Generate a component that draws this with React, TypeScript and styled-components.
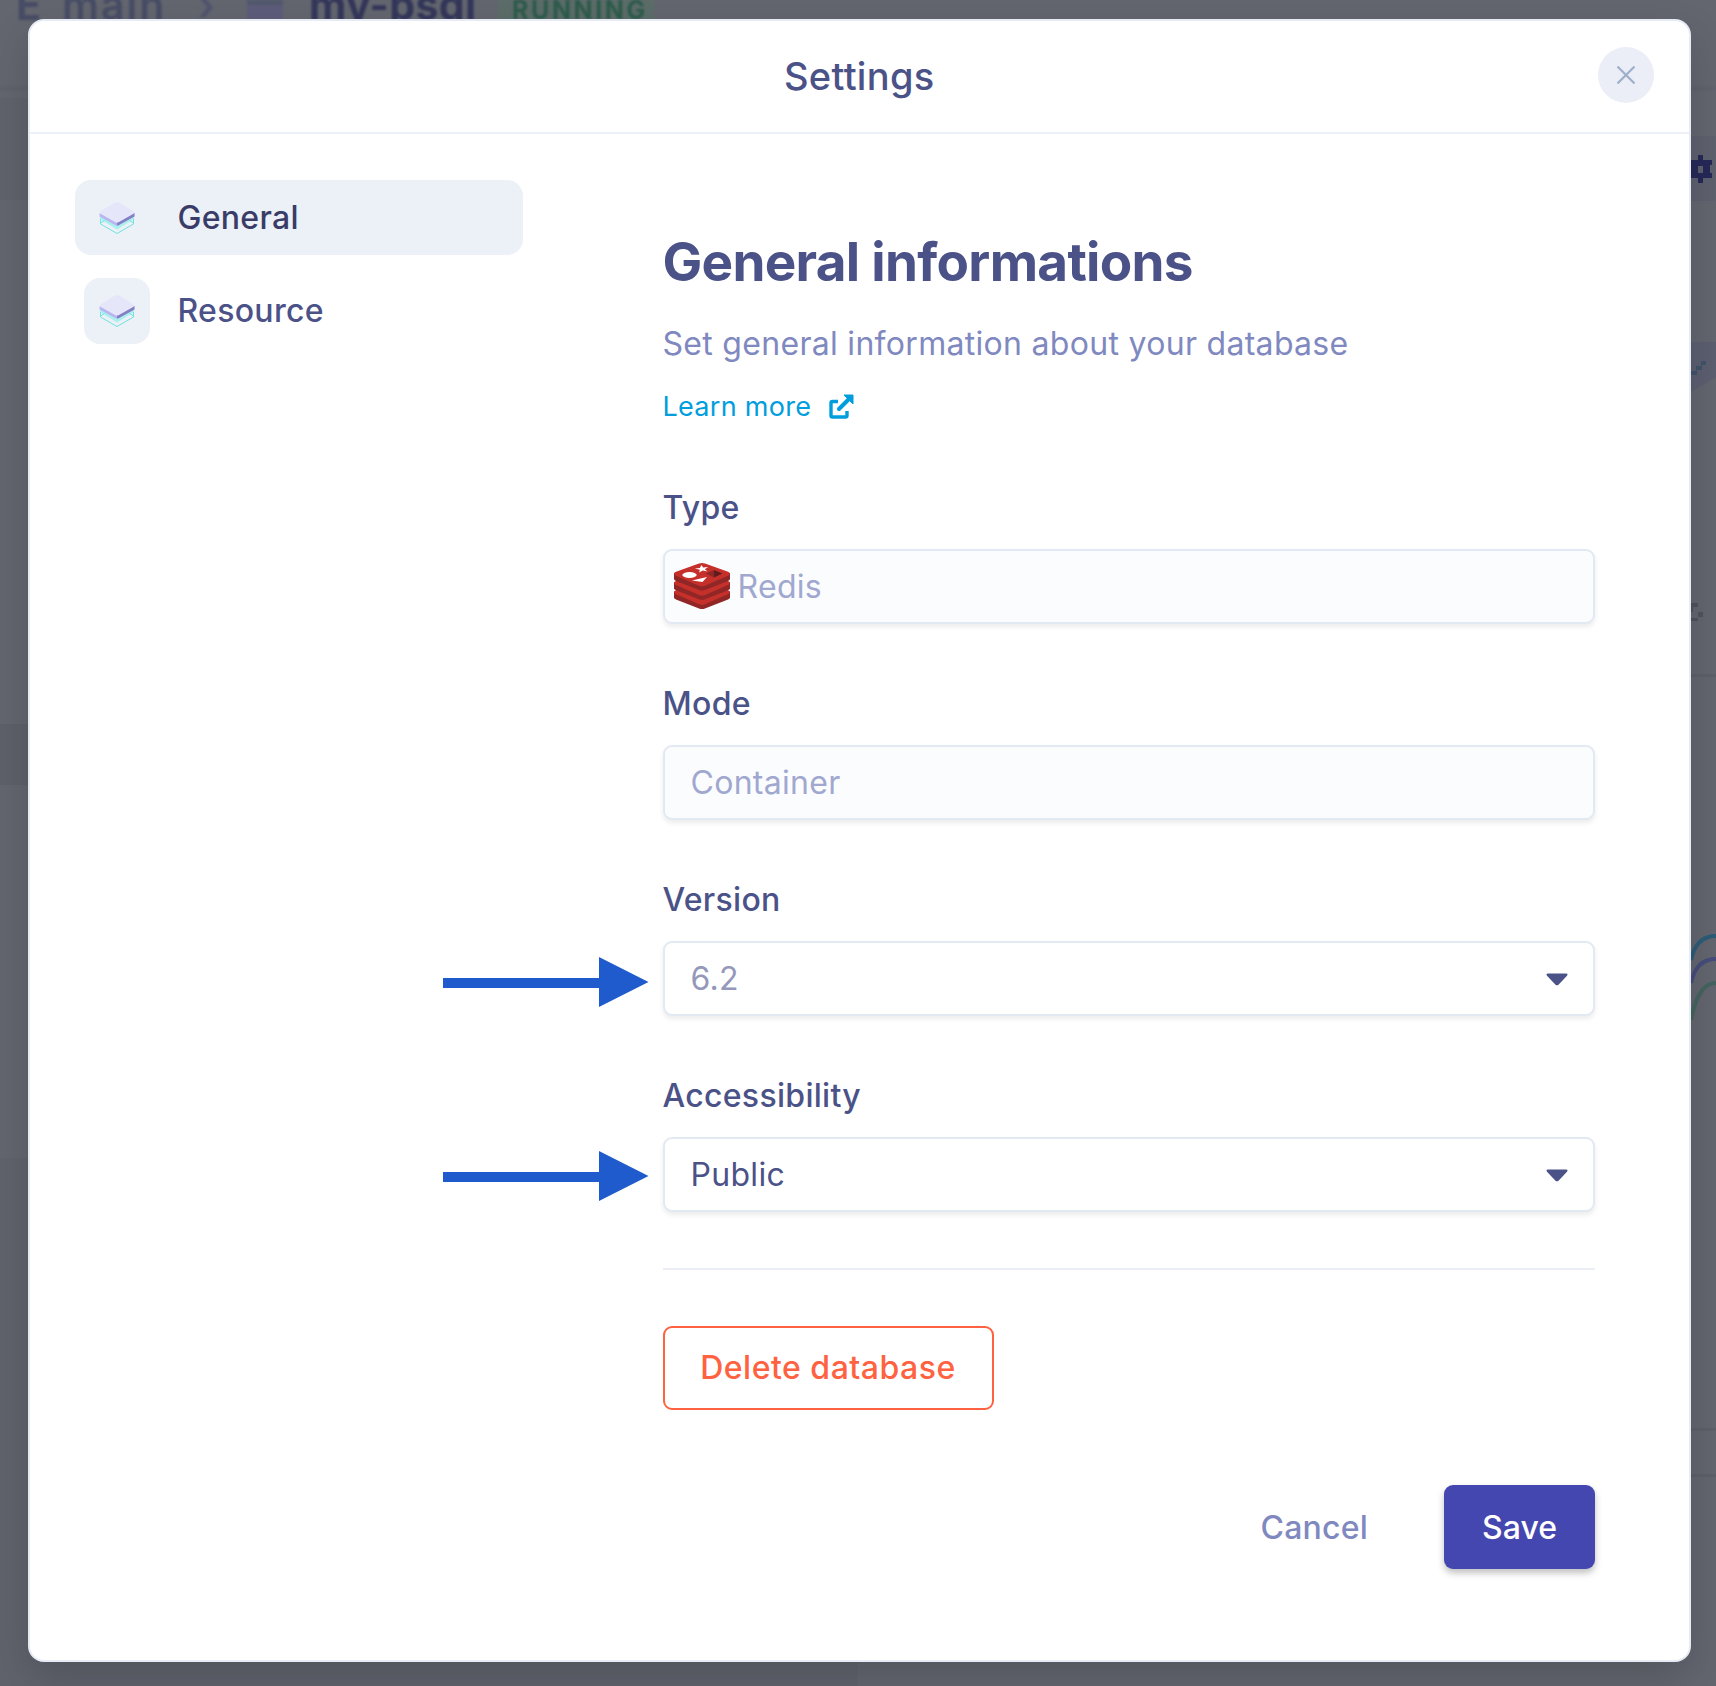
import React from "react";
import styled, { createGlobalStyle } from "styled-components";

const GlobalStyle = createGlobalStyle`
  *, *::before, *::after { box-sizing: border-box; }
  html, body { margin: 0; padding: 0; }
  body { background: #63666f; overflow: hidden; }
  button { font: inherit; cursor: pointer; }
`;

const Page = styled.div`
  position: relative;
  width: 1716px;
  height: 1686px;
  overflow: hidden;
  font-family: Inter, "Liberation Sans", sans-serif;
  font-size: 32px;
  letter-spacing: 0.3px;
  color: #4b5288;
`;

/* ---------- dimmed console behind the dialog ---------- */

const Console = styled.div`
  height: 100%;
  display: grid;
  grid-template: 90px 1fr / 1fr 1fr;
  background: #63666f;
`;

const Breadcrumb = styled.div`
  grid-column: 1 / -1;
  display: flex;
  align-items: flex-start;
  padding-left: 16px;
  border-bottom: 3px solid #5e616b;
  filter: blur(1px);
`;

const Crumb = styled.span<{ $width: number; $color: string; $bold?: boolean }>`
  width: ${(p) => p.$width}px;
  margin-top: -15px;
  line-height: 40px;
  font-size: 41px;
  white-space: nowrap;
  letter-spacing: ${(p) => (p.$bold ? 0.4 : 2)}px;
  font-weight: ${(p) => (p.$bold ? 700 : 600)};
  color: ${(p) => p.$color};
`;

const CrumbIcon = styled.span`
  width: 36px;
  height: 25px;
  margin-right: 26px;
  background: linear-gradient(#51596e 20%, #5d5c7a 20%);
`;

const StateTag = styled.span`
  width: 156px;
  height: 34px;
  padding-left: 14px;
  margin-left: 9px;
  background: #5c6d69;
  color: #2d5b4b;
  font-weight: 700;
  font-size: 25px;
  line-height: 20px;
  letter-spacing: 2.6px;
`;

const Column = styled.div`
  display: flex;
  flex-direction: column;
`;

const Strip = styled.div<{ $height: number; $color?: string; $line?: boolean }>`
  flex: none;
  height: ${(p) => p.$height}px;
  background: ${(p) => p.$color ?? "transparent"};
  border-bottom: ${(p) => (p.$line ? "3px solid #5d6069" : "none")};
`;

const EdgeArt = styled.svg`
  position: absolute;
  top: 0;
  right: 0;
`;

/* ---------- dialog ---------- */

const Overlay = styled.div`
  position: absolute;
  inset: 0;
  padding: 19px 25px 24px 27.5px;
  display: flex;
`;

const Dialog = styled.section`
  flex: 1;
  display: flex;
  flex-direction: column;
  background: #fff;
  border: 2px solid #e6ebf5;
  border-radius: 16px;
  box-shadow: 0 16px 40px rgba(0, 0, 0, 0.16);
`;

const Header = styled.header`
  height: 113px;
  flex: none;
  display: grid;
  grid-template-columns: 1fr auto 1fr;
  align-items: center;
  padding: 0 35px;
  border-bottom: 2px solid #ecf1f7;
`;

const Title = styled.h1`
  grid-column: 2;
  margin: 0 0 2px;
  font-size: 38px;
  line-height: 44px;
  font-weight: 500;
`;

const CloseButton = styled.button`
  justify-self: end;
  width: 56px;
  height: 56px;
  margin-bottom: 3px;
  display: grid;
  place-items: center;
  padding: 0;
  border: 0;
  border-radius: 50%;
  background: #ebeef7;
`;

const Body = styled.div`
  flex: 1;
  display: flex;
  align-items: flex-start;
`;

const Nav = styled.nav`
  width: 448px;
  margin: 46px 140px 0 45px;
  display: flex;
  flex-direction: column;
  gap: 18px;
`;

const NavItem = styled.a<{ $active?: boolean }>`
  height: 75px;
  display: flex;
  align-items: center;
  padding-left: 9px;
  gap: 28px;
  border-radius: 16px;
  font-weight: 500;
  background: ${(p) => (p.$active ? "#ecf0f7" : "transparent")};
  color: ${(p) => (p.$active ? "#383c67" : "#4b5288")};
`;

const NavIcon = styled.span`
  width: 66px;
  height: 66px;
  display: grid;
  place-items: center;
  border-radius: 16px;
  background: #ecf0f7;
`;

const Form = styled.main`
  width: 932.5px;
  display: flex;
  flex-direction: column;
  align-items: stretch;
`;

const Heading = styled.h2`
  margin: 94px 0 0;
  font-size: 53px;
  line-height: 68px;
  font-weight: 700;
  letter-spacing: -0.7px;
`;

const Lead = styled.p`
  margin: 28px 0 0;
  line-height: 40px;
  white-space: nowrap;
  color: #7f89bf;
`;

const LearnMore = styled.a`
  display: flex;
  align-items: center;
  gap: 18px;
  margin: 24px 0 60px;
  height: 36px;
  font-size: 27px;
  color: #009edd;
`;

const Field = styled.div`
  height: 196px;
  padding-top: 4px;
  display: flex;
  flex-direction: column;
  gap: 21px;
`;

const Label = styled.label`
  line-height: 40px;
  font-weight: 500;
`;

const Control = styled.div<{ $disabled?: boolean; $color: string; $inset: number }>`
  height: 75px;
  display: flex;
  align-items: center;
  padding: 0 25px 1px ${(p) => p.$inset}px;
  gap: 8px;
  border: 2px solid #e2e9f3;
  border-radius: 9px;
  background: ${(p) => (p.$disabled ? "#fbfcfe" : "#fff")};
  box-shadow: 0 3px 5px rgba(0, 0, 0, 0.08);
  color: ${(p) => p.$color};

  svg:last-child {
    position: relative;
    top: 1px;
  }
`;

const Value = styled.span`
  flex: 1;
`;

const Divider = styled.hr`
  width: 100%;
  height: 2px;
  margin: 0;
  border: 0;
  background: #ebeff5;
`;

const DangerButton = styled.button`
  align-self: flex-start;
  width: 331px;
  height: 84px;
  margin-top: 56px;
  padding: 0 0 1px;
  border: 2px solid #ff6240;
  border-radius: 9px;
  background: #fff;
  color: #ff6240;
  font-weight: 500;
  letter-spacing: 0.5px;
`;

const Actions = styled.div`
  display: flex;
  justify-content: flex-end;
  gap: 76px;
  margin-top: 75px;
`;

const CancelButton = styled.button`
  padding: 0;
  border: 0;
  background: none;
  font-weight: 500;
  letter-spacing: 0.2px;
  color: #7f89bf;
`;

const SaveButton = styled.button`
  width: 151px;
  height: 84px;
  padding: 0;
  border: 0;
  border-radius: 9px;
  background: #4547b1;
  box-shadow: 0 4px 7px rgba(0, 0, 0, 0.25);
  color: #fff;
  font-weight: 500;
`;

/* Callout arrows drawn over the dialog */
const Callout = styled.svg<{ $top: number }>`
  position: absolute;
  left: 443px;
  top: ${(p) => p.$top}px;
`;

const LayersIcon = () => (
  <svg width="36" height="34" viewBox="0 0 36 34">
    <path d="M1 18 18 28.500 35 18v-4L18 23 1 14z" fill="#a9f0ee" />
    <path d="M1.500 18v5L18 32.500 34.500 23v-5M1.500 22l4-2.500M34.500 22l-4-2.500" fill="none" stroke="#6fe3de" strokeWidth="1" />
    <path d="M.6 12v3.500L16 24q2 1 4 0l15.400-8.500V12L18 21z" fill="#b9b5f0" />
    <path d="M18 21 35.400 12v3.500L20 24q-1 .6-2 .6z" fill="#8580c4" />
    <path d="M16 1.500q2-1 4 0l14 8.500q2 1.500 0 3L20 21q-2 1-4 0L2 13q-2-1.500 0-3z" fill="#e6e6fb" />
  </svg>
);

const RedisIcon = () => (
  <svg width="56" height="47" viewBox="0 0 56 47">
    {[18.5, 9.25, 0].map((y) => (
      <g key={y} transform={`translate(0 ${y})`}>
        <path d="M0 10v6q0 1 2 2l23 9q3 1 6 0L54 18q2-1 2-2v-6z" fill="#912626" />
        <path d="M1.500 12.500Q-1.500 10 2 8.800L25 .6q3-1 6 0L54 8.800q3.500 1.200.5 3.700L31 22.700q-3 1.200-6 0z" fill="#c6302b" />
      </g>
    ))}
    <ellipse cx="15.500" cy="12" rx="7.200" ry="2.900" fill="#fff" />
    <path d="m27.500 2 1.600 2.400 5-.4-3.200 2.200 2.600 2.400-4.700-1-3.600 2 .6-2.800-5-1.300 5-.6z" fill="#fff" />
    <path d="M18 17.500 33 14l-4.500 5z" fill="#fff" />
    <path d="M31.500 10.500 40 7v7.500z" fill="#912626" />
    <path d="m40 7 8.500 3.500L40 14.500z" fill="#621b1c" />
  </svg>
);

const ExternalIcon = () => (
  <svg width="25" height="25" viewBox="0 0 25 25" fill="none" stroke="#009edd">
    <path d="M9 7.500H3.500a1.500 1.500 0 0 0-1.500 1.500v12.500A1.500 1.500 0 0 0 3.500 23h13a1.500 1.500 0 0 0 1.500-1.500V17" strokeWidth="3.400" />
    <path d="M10 15 19.500 5.500" strokeWidth="4" strokeLinecap="round" />
    <path d="M15 1h9v9z" fill="#009edd" strokeWidth="1" strokeLinejoin="round" />
  </svg>
);

const Caret = () => (
  <svg width="22" height="13" viewBox="0 0 22 13">
    <path d="M2 .5h18q2.500 0 1 2.200l-8.500 9q-1.500 1.300-3 0L1 2.700Q-.5.500 2 .5z" fill="#4b5288" />
  </svg>
);

const CloseIcon = () => (
  <svg width="18" height="18" viewBox="0 0 18 18" stroke="#9fb0ca" strokeWidth="2.300" strokeLinecap="round">
    <path d="m1.200 1.200 15.600 15.600M16.800 1.200 1.200 16.800" />
  </svg>
);

const ArrowCallout = ({ top }: { top: number }) => (
  <Callout $top={top} width="206" height="50" viewBox="0 0 206 50" fill="#1f5bcd">
    <path d="M0 21h156V0l49.500 25L156 50V31H0z" />
  </Callout>
);

const fields = [
  { label: "Type", value: "Redis", disabled: true, color: "#a0a8d0", inset: 9, icon: <RedisIcon /> },
  { label: "Mode", value: "Container", disabled: true, color: "#a0a8d0", inset: 26 },
  { label: "Version", value: "6.2", color: "#9498ba", inset: 26, select: true },
  { label: "Accessibility", value: "Public", color: "#4b5288", inset: 26, select: true },
];

export default function App() {
  return (
    <Page>
      <GlobalStyle />
      <Console>
        <Breadcrumb>
          <Crumb $width={46} $color="#484d66" $bold>E</Crumb>
          <Crumb $width={136} $color="#484d66">main</Crumb>
          <Crumb $width={49} $color="#50546e">›</Crumb>
          <CrumbIcon />
          <Crumb $width={180} $color="#34375a" $bold>my-psql</Crumb>
          <StateTag>RUNNING</StateTag>
        </Breadcrumb>
        <Column>
          <Strip $height={8} />
          <Strip $height={102} $color="#60636c" />
          <Strip $height={524} />
          <Strip $height={61} $color="#5e616a" />
          <Strip $height={373} />
          <Strip $height={528} $color="#60636c" />
        </Column>
        <Column>
          <Strip $height={46} />
          <Strip $height={65} $color="#5e616e" />
          <Strip $height={476} $line />
          <Strip $height={754} $line />
          <Strip $height={46} $line />
        </Column>
      </Console>
      <EdgeArt width="25" height="1100" viewBox="0 0 25 1100">
        <path d="M7 155h5v5h9v5h-2v8h2v5h-9v5H7v-5H0v-18h7zM7 166v7h5v-7z" fill="#262858" fillRule="evenodd" />
        <path d="M0 342h25v35l-25 15z" fill="#5c5f70" />
        <path d="M0 371h5v-5h5v-5h5v4h-4v5H6v5H0z" fill="#41546a" />
        <path d="M0 603h7v4H0zm0 9h2v-5H0zm7 0h5v5H7zm-7 6h7v3H0z" fill="#50525e" />
        <path d="M0 960Q5 936 25 936" fill="none" stroke="#2d5c78" strokeWidth="4" />
        <path d="M0 983Q5 959 25 959" fill="none" stroke="#474d7b" strokeWidth="4" />
        <path d="M0 1020Q7 983 25 983" fill="none" stroke="#45645f" strokeWidth="4" />
      </EdgeArt>
      <Overlay>
        <Dialog>
          <Header>
            <Title>Settings</Title>
            <CloseButton aria-label="Close"><CloseIcon /></CloseButton>
          </Header>
          <Body>
            <Nav>
              <NavItem $active><NavIcon><LayersIcon /></NavIcon>General</NavItem>
              <NavItem><NavIcon><LayersIcon /></NavIcon>Resource</NavItem>
            </Nav>
            <Form>
              <Heading>General informations</Heading>
              <Lead>Set general information about your database</Lead>
              <LearnMore>Learn more<ExternalIcon /></LearnMore>
              {fields.map((f) => (
                <Field key={f.label}>
                  <Label>{f.label}</Label>
                  <Control $disabled={f.disabled} $color={f.color} $inset={f.inset}>
                    {f.icon}
                    <Value>{f.value}</Value>
                    {f.select && <Caret />}
                  </Control>
                </Field>
              ))}
              <Divider />
              <DangerButton>Delete database</DangerButton>
              <Actions>
                <CancelButton>Cancel</CancelButton>
                <SaveButton>Save</SaveButton>
              </Actions>
            </Form>
          </Body>
        </Dialog>
      </Overlay>
      <ArrowCallout top={957} />
      <ArrowCallout top={1151} />
    </Page>
  );
}
